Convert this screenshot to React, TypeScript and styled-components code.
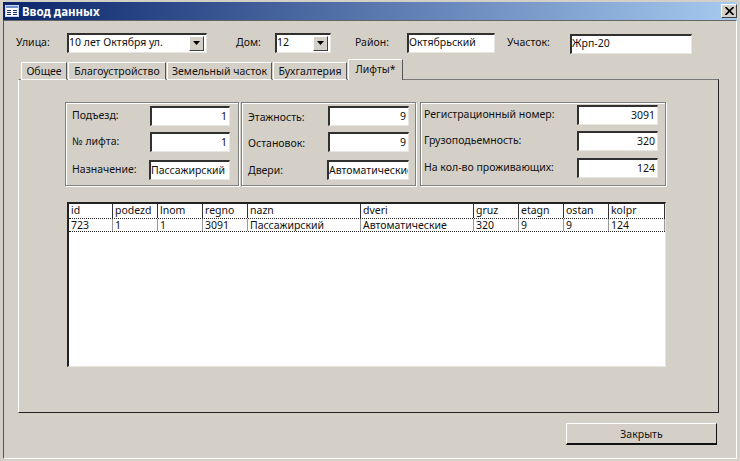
import React from "react";
import styled, { createGlobalStyle } from "styled-components";

const face = "#d4d0c8";

const GlobalStyle = createGlobalStyle`
  html, body {
    margin: 0;
    padding: 0;
    background: ${face};
  }
  * {
    box-sizing: border-box;
  }
`;

const Win = styled.div`
  width: 740px;
  height: 461px;
  padding: 2px 3px;
  background: ${face};
  display: flex;
  flex-direction: column;
  font-family: "Noto Sans", sans-serif;
  font-size: 10.5px;
  color: #111;
  overflow: hidden;
`;

const TitleBar = styled.div`
  height: 18px;
  flex-shrink: 0;
  display: flex;
  align-items: center;
  padding: 0 0 0 2px;
  gap: 3px;
  color: #fff;
  font-weight: 700;
  font-size: 11.5px;
  background: linear-gradient(90deg, #0a246a, #a6caf0);
`;

const TitleText = styled.span`
  flex: 1;
`;

const CloseButton = styled.div`
  width: 16px;
  height: 14px;
  display: flex;
  align-items: center;
  justify-content: center;
  background: ${face};
  border: 1px solid;
  border-color: #fff #404040 #404040 #fff;
`;

const Body = styled.div`
  flex: 1;
  display: flex;
  flex-direction: column;
  border: 1px solid;
  border-color: #666 #fff #fff #555;
  padding: 11px 0 0 12px;
`;

const TopRow = styled.div`
  height: 21px;
  display: flex;
  align-items: center;
`;

const Label = styled.span<{ $width: number; $left?: number; $shift?: number }>`
  flex-shrink: 0;
  white-space: nowrap;
  width: ${(p) => p.$width}px;
  margin-left: ${(p) => p.$left ?? 0}px;
  margin-top: ${(p) => ((p.$shift ?? 0) > 0 ? 2 : 0)}px;
  margin-bottom: ${(p) => ((p.$shift ?? 0) < 0 ? 2 : 0)}px;
`;

const Sunken = styled.div<{ $width: number; $right?: boolean; $drop?: number }>`
  width: ${(p) => p.$width}px;
  height: 20px;
  margin-top: ${(p) => p.$drop ?? 0}px;
  flex-shrink: 0;
  display: flex;
  align-items: center;
  justify-content: ${(p) => (p.$right ? "flex-end" : "flex-start")};
  padding-right: ${(p) => (p.$right ? 2 : 0)}px;
  background: #fff;
  border: 1px solid;
  border-color: #303030 #e8e6e0 #e8e6e0 #303030;
  border-top-width: 2px;
  border-left-width: 2px;
  white-space: nowrap;
  overflow: hidden;
`;

const Value = styled.span`
  margin-bottom: 2px;
`;

const ComboText = styled(Value)`
  flex: 1;
`;

const Arrow = styled.div`
  width: 15px;
  height: 15px;
  margin-right: 2px;
  flex-shrink: 0;
  display: flex;
  align-items: center;
  justify-content: center;
  background: ${face};
  border: 1px solid;
  border-color: #fff #404040 #404040 #fff;
`;

const Tabs = styled.div`
  margin: 6px 0 -1px;
  height: 21px;
  display: flex;
  align-items: flex-end;
  gap: 1px;
  padding-left: 5px;
  position: relative;
  z-index: 1;
`;

const Tab = styled.div<{ $active?: boolean; $width: number }>`
  height: ${(p) => (p.$active ? 21 : 18)}px;
  width: ${(p) => p.$width}px;
  padding-bottom: ${(p) => (p.$active ? 3 : 0)}px;
  display: flex;
  align-items: center;
  justify-content: center;
  white-space: nowrap;
  background: ${face};
  border-top: 1px solid #fff;
  border-left: 1px solid #fff;
  border-right: 1px solid #555;
  ${(p) => (p.$active ? "" : "border-bottom: 1px solid #fff;")}
`;

const Page = styled.div`
  width: 701px;
  height: 334px;
  margin-left: 2px;
  border: 1px solid;
  border-color: #777 #222 #222 #fff;
  padding: 22px 0 0 46px;
`;

const Groups = styled.div`
  display: flex;
  height: 84px;
  gap: 2px;
`;

const Group = styled.div<{ $width: number; $left?: number; $top?: number }>`
  width: ${(p) => p.$width}px;
  margin-left: ${(p) => p.$left ?? 0}px;
  padding-top: ${(p) => p.$top ?? 3}px;
  display: flex;
  flex-direction: column;
  border: 1px solid #808080;
  box-shadow: inset 1px 1px 0 #fff, 1px 1px 0 #fff;
`;

const Field = styled.div<{ $gap?: number; $pad: number }>`
  display: flex;
  align-items: center;
  margin-bottom: ${(p) => p.$gap ?? 0}px;
  padding-left: ${(p) => p.$pad}px;
`;

const Grid = styled.div`
  width: 599px;
  height: 165px;
  margin: 16px 0 0 2px;
  background: #fff;
  border: 1px solid;
  border-color: #222 #e8e6e0 #e8e6e0 #222;
  border-top-width: 2px;
  border-left-width: 2px;
`;

const Row = styled.div<{ $selected?: boolean }>`
  display: flex;
  height: 14px;
  ${(p) => (p.$selected ? "border-top: 1px dotted #222; border-bottom: 1px dotted #222;" : "")}
`;

const Cell = styled.div<{ $width: number; $line: string }>`
  width: ${(p) => p.$width}px;
  flex-shrink: 0;
  padding-left: 2px;
  line-height: 13px;
  border-right: 1px solid ${(p) => p.$line};
  overflow: hidden;
  white-space: nowrap;
`;

const Footer = styled.div`
  display: flex;
  justify-content: flex-end;
  padding: 10px 19px 0 0;
`;

const CloseAction = styled.div`
  width: 151px;
  height: 22px;
  display: flex;
  align-items: center;
  justify-content: center;
  background: ${face};
  border: 1px solid;
  border-color: #fff #111 #111 #fff;
  border-bottom-width: 2px;
`;

const columns = [44, 45, 45, 45, 113, 113, 45, 45, 45, 56];
const headers = ["id", "podezd", "lnom", "regno", "nazn", "dveri", "gruz", "etagn", "ostan", "kolpr"];
const values = ["723", "1", "1", "3091", "Пассажирский", "Автоматические", "320", "9", "9", "124"];

function DownArrow() {
  return (
    <svg width="7" height="4" viewBox="0 0 7 4">
      <path d="M0 0h7L3.5 4z" fill="#000" />
    </svg>
  );
}

function FormIcon() {
  return (
    <svg width="14" height="12" viewBox="0 0 14 12">
      <rect x="0.5" y="0.5" width="13" height="11" fill="#fff" stroke="#c9d6f0" />
      <rect x="1" y="1" width="12" height="2" fill="#6f8fd0" />
      <path d="M2 5.5h4M2 7.5h4M2 9.5h4M8 5.5h4M8 7.5h4M8 9.5h4" stroke="#1a2f70" />
    </svg>
  );
}

function Combo({ width, text }: { width: number; text: string }) {
  return (
    <Sunken $width={width}>
      <ComboText>{text}</ComboText>
      <Arrow>
        <DownArrow />
      </Arrow>
    </Sunken>
  );
}

export default function App() {
  return (
    <Win>
      <GlobalStyle />
      <TitleBar>
        <FormIcon />
        <TitleText>Ввод данных</TitleText>
        <CloseButton>
          <svg width="9" height="8" viewBox="0 0 9 8">
            <path d="M0.5 0l8 8M8.5 0l-8 8" stroke="#000" strokeWidth="1.6" />
          </svg>
        </CloseButton>
      </TitleBar>
      <Body>
        <TopRow>
          <Label $width={51} $shift={-1}>Улица:</Label>
          <Combo width={140} text="10 лет Октября ул." />
          <Label $width={39} $left={29} $shift={-1}>Дом:</Label>
          <Combo width={56} text="12" />
          <Label $width={52} $left={24} $shift={-1}>Район:</Label>
          <Sunken $width={88}><Value>Октябрьский</Value></Sunken>
          <Label $width={63} $left={12} $shift={-1}>Участок:</Label>
          <Sunken $width={122} $drop={2}><Value>Жрп-20</Value></Sunken>
        </TopRow>
        <Tabs>
          <Tab $width={46}>Общее</Tab>
          <Tab $width={98}>Благоустройство</Tab>
          <Tab $width={105}>Земельный часток</Tab>
          <Tab $width={74}>Бухгалтерия</Tab>
          <Tab $width={55} $active>Лифты*</Tab>
        </Tabs>
        <Page>
          <Groups>
            <Group $width={174}>
              <Field $gap={6} $pad={6}>
                <Label $width={78} $shift={-1}>Подъезд:</Label>
                <Sunken $width={80} $right><Value>1</Value></Sunken>
              </Field>
              <Field $gap={8} $pad={6}>
                <Label $width={78} $shift={-1}>№ лифта:</Label>
                <Sunken $width={80} $right><Value>1</Value></Sunken>
              </Field>
              <Field $pad={6}>
                <Label $width={77} $shift={-1}>Назначение:</Label>
                <Sunken $width={81}><Value>Пассажирский</Value></Sunken>
              </Field>
            </Group>
            <Group $width={175}>
              <Field $gap={6} $pad={6}>
                <Label $width={80} $shift={1}>Этажность:</Label>
                <Sunken $width={81} $right><Value>9</Value></Sunken>
              </Field>
              <Field $gap={8} $pad={6}>
                <Label $width={80} $shift={1}>Остановок:</Label>
                <Sunken $width={81} $right><Value>9</Value></Sunken>
              </Field>
              <Field $pad={6}>
                <Label $width={79}>Двери:</Label>
                <Sunken $width={82}><Value>Автоматические</Value></Sunken>
              </Field>
            </Group>
            <Group $width={246} $left={2} $top={2}>
              <Field $gap={6} $pad={3}>
                <Label $width={153} $shift={-1}>Регистрационный номер:</Label>
                <Sunken $width={81} $right><Value>3091</Value></Sunken>
              </Field>
              <Field $gap={7} $pad={3}>
                <Label $width={153} $shift={-1}>Грузоподьемность:</Label>
                <Sunken $width={81} $right><Value>320</Value></Sunken>
              </Field>
              <Field $pad={3}>
                <Label $width={153} $shift={-1}>На кол-во проживающих:</Label>
                <Sunken $width={81} $right><Value>124</Value></Sunken>
              </Field>
            </Group>
          </Groups>
          <Grid>
            <Row>
              {headers.map((h, i) => (
                <Cell key={h} $width={columns[i]} $line="#333">{h}</Cell>
              ))}
            </Row>
            <Row $selected>
              {values.map((v, i) => (
                <Cell key={headers[i]} $width={columns[i]} $line="#999">{v}</Cell>
              ))}
            </Row>
          </Grid>
        </Page>
        <Footer>
          <CloseAction>Закрыть</CloseAction>
        </Footer>
      </Body>
    </Win>
  );
}
